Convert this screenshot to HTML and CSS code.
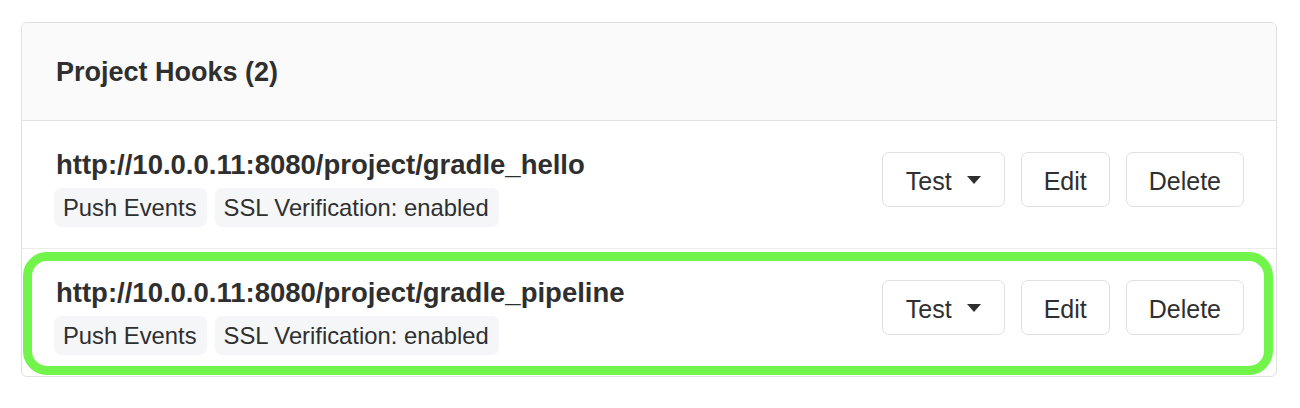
FILE: index.html
```html
<!DOCTYPE html>
<html>
<head>
<meta charset="utf-8">
<link rel="stylesheet" href="styles.css">
</head>
<body>
<div class="page">
  <div class="card">
    <div class="card-header">Project Hooks (2)</div>
    <ul class="hooks">
      <li class="hook">
        <div class="hook-info">
          <div class="hook-url">http://10.0.0.11:8080/project/gradle_hello</div>
          <div class="badges">
            <span class="badge">Push Events</span>
            <span class="badge">SSL Verification: enabled</span>
          </div>
        </div>
        <div class="actions">
          <button class="btn btn-test">Test <span class="caret"></span></button>
          <button class="btn">Edit</button>
          <button class="btn">Delete</button>
        </div>
      </li>
      <li class="hook highlighted">
        <div class="hook-info">
          <div class="hook-url">http://10.0.0.11:8080/project/gradle_pipeline</div>
          <div class="badges">
            <span class="badge">Push Events</span>
            <span class="badge">SSL Verification: enabled</span>
          </div>
        </div>
        <div class="actions">
          <button class="btn btn-test">Test <span class="caret"></span></button>
          <button class="btn">Edit</button>
          <button class="btn">Delete</button>
        </div>
        <div class="highlight-ring"></div>
      </li>
    </ul>
  </div>
</div>
</body>
</html>
```

FILE: styles.css
```css
* { box-sizing: border-box; }

body {
  margin: 0;
  background: #ffffff;
  font-family: "Liberation Sans", Arial, sans-serif;
  color: #2f2f2f;
}

.page {
  padding: 22px 23px 0 21px;
}

.card {
  width: 1256px;
  border: 1px solid #e0e0e0;
  border-radius: 6px;
  overflow: hidden;
}

.card-header {
  background: #fafafa;
  border-bottom: 1px solid #e3e3e3;
  padding: 33px 32px 32px 34px;
  font-size: 27px;
  line-height: 32px;
  font-weight: 700;
}

.hooks {
  list-style: none;
  margin: 0;
  padding: 0;
}

.hook {
  position: relative;
  display: flex;
  justify-content: space-between;
  align-items: flex-start;
  padding: 27px 32px 21px;
  height: 128px;
  border-bottom: 1px solid #ececec;
}

.hook:last-child {
  border-bottom: none;
  height: 127px;
}

.hook-url {
  font-size: 27.5px;
  line-height: 33px;
  font-weight: 700;
  padding-left: 2px;
}

.badges {
  display: flex;
  gap: 8px;
  margin-top: 7px;
}

.badge {
  background: #f5f6f8;
  border-radius: 7px;
  padding: 6px 10px 6px 9px;
  font-size: 23.8px;
  line-height: 27px;
}

.actions {
  display: flex;
  gap: 16px;
  margin-top: 4px;
}

.btn {
  font-family: "Liberation Sans", Arial, sans-serif;
  font-size: 25px;
  line-height: 29px;
  color: #2f2f2f;
  background: #ffffff;
  border: 1px solid #e0e0e0;
  border-radius: 7px;
  padding: 14px 22px 10px;
  height: 55px;
  display: flex;
  align-items: center;
}

.btn-test {
  padding-left: 23px;
  padding-right: 23px;
}

.caret {
  display: inline-block;
  margin-left: 15px;
  width: 0;
  height: 0;
  border-left: 7.5px solid transparent;
  border-right: 7.5px solid transparent;
  border-top: 8px solid #2f2f2f;
  margin-top: -4px;
}

.highlight-ring {
  position: absolute;
  left: 1px;
  right: 3px;
  top: 3px;
  bottom: 1px;
  border: 9px solid #72f54b;
  border-radius: 24px;
  pointer-events: none;
}
```
